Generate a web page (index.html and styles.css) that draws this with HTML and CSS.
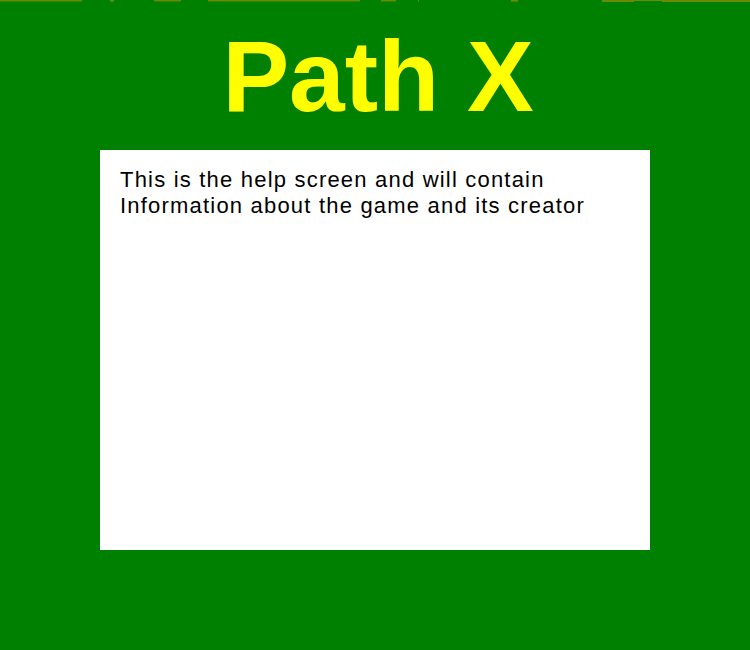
FILE: index.html
```html
<!DOCTYPE html>
<html>
<head>
<meta charset="utf-8">
<link rel="stylesheet" href="styles.css">
</head>
<body>
<div class="edge">
<svg width="750" height="2" viewBox="0 0 750 2">
<g fill="#6e8a00">
<rect x="0" y="0" width="82" height="1.4"/>
<rect x="110" y="0" width="4" height="1.6"/>
<rect x="154" y="0" width="27" height="1.4"/>
<rect x="208" y="0" width="152" height="1.4"/>
<rect x="381" y="0" width="15" height="1.4"/>
<rect x="418" y="0" width="1" height="1.4"/>
<rect x="511" y="0" width="7" height="1.6"/>
<rect x="602" y="0" width="32" height="2"/>
<rect x="634" y="0" width="28" height="1"/>
<rect x="662" y="0" width="88" height="2"/>
</g>
</svg>
</div>
<h1 class="title">Path X</h1>
<div class="panel">
<p class="help">This is the help screen and will contain<br>Information about the game and its creator</p>
</div>
</body>
</html>
```
FILE: styles.css
```css
html, body {
  margin: 0;
  padding: 0;
}
body {
  background: #008000;
  width: 750px;
  height: 650px;
  overflow: hidden;
  font-family: "Liberation Sans", Arial, sans-serif;
}
.edge {
  height: 2px;
  line-height: 0;
}
.edge svg {
  display: block;
}
.title {
  margin: 24px 0 0 6px;
  font-size: 100px;
  line-height: 100px;
  font-weight: bold;
  color: #ffff00;
  text-align: center;
}
.panel {
  margin: 24px 0 0 100px;
  width: 550px;
  height: 400px;
  background: #ffffff;
  box-sizing: border-box;
  padding: 17px 20px;
}
.help {
  margin: 0;
  font-size: 22px;
  line-height: 26px;
  letter-spacing: 1.2px;
  color: #000;
}
```
